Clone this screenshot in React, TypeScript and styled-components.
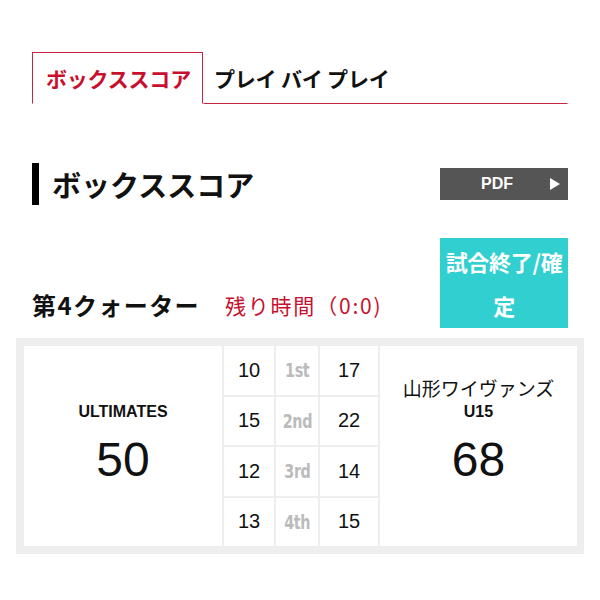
import React from "react";
import styled, { createGlobalStyle } from "styled-components";

const GlobalStyle = createGlobalStyle`
  body {
    margin: 0;
    background: #fff;
    font-family: "Liberation Sans", "Noto Sans CJK JP", sans-serif;
    color: #111;
  }
`;

const Page = styled.div`
  width: 600px;
  padding-top: 52px;
`;

const Inner = styled.div`
  margin: 0 32px;
`;

const TabBar = styled.div`
  display: flex;
  align-items: stretch;
  height: 52px;
`;

const Tab = styled.div<{ $active?: boolean }>`
  display: flex;
  align-items: center;
  padding: 0 11px 0 ${(p) => (p.$active ? "13px" : "10px")};
  font-family: "Noto Sans CJK JP", sans-serif;
  font-weight: 700;
  font-size: 21px;
  letter-spacing: -0.2px;
  color: ${(p) => (p.$active ? "#c8102e" : "#111")};
  border: 1px solid ${(p) => (p.$active ? "#c8243f" : "transparent")};
  border-bottom: ${(p) => (p.$active ? "1px solid transparent" : "1px solid #c8243f")};
  flex: ${(p) => (p.$active ? "0 0 auto" : "1")};
  box-sizing: border-box;
`;

const HeadRow = styled.div`
  display: flex;
  align-items: center;
  justify-content: space-between;
  margin-top: 59px;
  height: 42px;
`;

const Heading = styled.h2`
  margin: 0;
  display: flex;
  align-items: center;
  height: 42px;
  border-left: 7px solid #000;
  padding-left: 13px;
  font-family: "Noto Sans CJK JP", sans-serif;
  font-weight: 700;
  font-size: 29px;
  color: #111;
`;

const PdfButton = styled.div`
  position: relative;
  width: 128px;
  height: 32px;
  background: #555;
  color: #fff;
  font-weight: 700;
  font-size: 16px;
  display: flex;
  align-items: center;
  justify-content: center;
  padding-right: 14px;
  box-sizing: border-box;
  &::after {
    content: "";
    position: absolute;
    right: 8px;
    top: 10px;
    border-left: 10px solid #fff;
    border-top: 6px solid transparent;
    border-bottom: 6px solid transparent;
  }
`;

const QuarterRow = styled.div`
  display: flex;
  align-items: flex-end;
  margin-top: 33px;
  margin-bottom: 10px;
`;

const Quarter = styled.div`
  font-family: "Noto Sans CJK JP", sans-serif;
  font-weight: 700;
  font-size: 24px;
  line-height: 36px;
  letter-spacing: 1.4px;
  padding-bottom: 5px;
`;

const Remain = styled.div`
  font-family: "Noto Sans CJK JP", sans-serif;
  font-size: 21px;
  line-height: 36px;
  letter-spacing: 1.8px;
  color: #c8102e;
  margin-left: 25px;
  padding-bottom: 5px;
`;

const FinalButton = styled.div`
  margin-left: auto;
  width: 128px;
  height: 90px;
  background: #31cfcf;
  color: #fff;
  font-family: "Noto Sans CJK JP", sans-serif;
  font-weight: 700;
  font-size: 22px;
  line-height: 44px;
  letter-spacing: -0.3px;
  text-align: center;
  box-sizing: border-box;
  padding-top: 1px;
  overflow: hidden;
  word-break: break-all;
`;

const ScoreBox = styled.div`
  margin: 0 16px;
  background: #eee;
  padding: 8px 7px 8px 8px;
  display: grid;
  grid-template-columns: 198px 50px 42px 58px 1fr;
  grid-template-rows: repeat(4, 1fr);
  gap: 2px;
  height: 216px;
  box-sizing: border-box;
`;

const TeamCell = styled.div<{ $col: number }>`
  grid-column: ${(p) => p.$col};
  grid-row: 1 / span 4;
  background: #fff;
  display: flex;
  flex-direction: column;
  align-items: center;
  padding-top: 30px;
`;

const TeamName = styled.div`
  height: 48px;
  display: flex;
  flex-direction: column;
  justify-content: flex-end;
  align-items: center;
`;

const NameJa = styled.div`
  font-family: "Noto Sans CJK JP", sans-serif;
  font-size: 19px;
  line-height: 24px;
`;

const NameEn = styled.div`
  font-weight: 700;
  font-size: 16px;
  line-height: 24px;
`;

const Total = styled.div`
  font-size: 48px;
  line-height: 50px;
  margin-top: 11px;
`;

const Cell = styled.div<{ $label?: boolean }>`
  background: #fff;
  display: flex;
  align-items: center;
  justify-content: center;
  font-size: 20px;
  font-weight: 400;
  color: #111;
`;

const Label = styled.span`
  display: inline-block;
  font-family: "Liberation Sans Narrow", "DejaVu Sans Condensed", sans-serif;
  font-weight: 700;
  font-size: 20px;
  color: #bbb;
  transform: scaleX(0.8);
  letter-spacing: -0.5px;
`;

const quarters = [
  { home: 10, label: "1st", away: 17 },
  { home: 15, label: "2nd", away: 22 },
  { home: 12, label: "3rd", away: 14 },
  { home: 13, label: "4th", away: 15 },
];

export default function App() {
  return (
    <Page>
      <GlobalStyle />
      <Inner>
        <TabBar>
          <Tab $active>ボックススコア</Tab>
          <Tab>プレイ バイ プレイ</Tab>
        </TabBar>
        <HeadRow>
          <Heading>ボックススコア</Heading>
          <PdfButton>PDF</PdfButton>
        </HeadRow>
        <QuarterRow>
          <Quarter>第4クォーター</Quarter>
          <Remain>残り時間（0:0)</Remain>
          <FinalButton>試合終了/確定</FinalButton>
        </QuarterRow>
      </Inner>
      <ScoreBox>
        <TeamCell $col={1}>
          <TeamName>
            <NameEn>ULTIMATES</NameEn>
          </TeamName>
          <Total>50</Total>
        </TeamCell>
        {quarters.map((q, i) => (
          <React.Fragment key={q.label}>
            <Cell style={{ gridColumn: 2, gridRow: i + 1 }}>{q.home}</Cell>
            <Cell style={{ gridColumn: 3, gridRow: i + 1 }}>
              <Label>{q.label}</Label>
            </Cell>
            <Cell style={{ gridColumn: 4, gridRow: i + 1 }}>{q.away}</Cell>
          </React.Fragment>
        ))}
        <TeamCell $col={5}>
          <TeamName>
            <NameJa>山形ワイヴァンズ</NameJa>
            <NameEn>U15</NameEn>
          </TeamName>
          <Total>68</Total>
        </TeamCell>
      </ScoreBox>
    </Page>
  );
}
